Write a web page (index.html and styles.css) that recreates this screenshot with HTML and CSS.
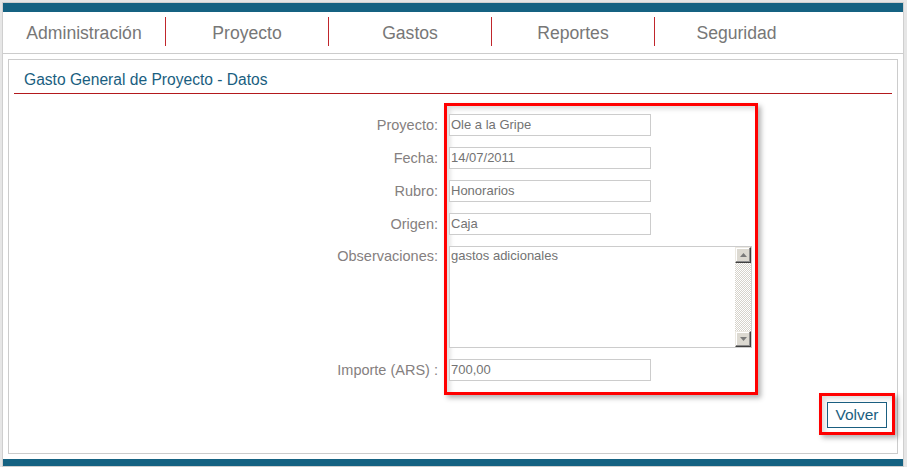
FILE: index.html
```html
<!DOCTYPE html>
<html lang="es">
<head>
<meta charset="utf-8">
<title>Gasto General de Proyecto - Datos</title>
<link rel="stylesheet" href="styles.css">
</head>
<body>
<div class="frame">
  <div class="topbar"></div>
  <nav class="menu">
    <div class="menu-item sep">Administración</div>
    <div class="menu-item sep">Proyecto</div>
    <div class="menu-item sep">Gastos</div>
    <div class="menu-item sep">Reportes</div>
    <div class="menu-item">Seguridad</div>
  </nav>
  <section class="panel">
    <h1 class="panel-title">Gasto General de Proyecto - Datos</h1>
    <div class="form">
      <div class="labels">
        <div class="label">Proyecto:</div>
        <div class="label">Fecha:</div>
        <div class="label">Rubro:</div>
        <div class="label">Origen:</div>
        <div class="label label-tall">Observaciones:</div>
        <div class="label">Importe (ARS) :</div>
      </div>
      <div class="fields highlight">
        <div class="field">Ole a la Gripe</div>
        <div class="field">14/07/2011</div>
        <div class="field">Honorarios</div>
        <div class="field">Caja</div>
        <div class="textarea">
          <div class="textarea-text">gastos adicionales</div>
          <div class="scrollbar">
            <div class="sb-btn"><svg width="7" height="4" viewBox="0 0 7 4"><path d="M3.5 0 L7 4 L0 4 Z" fill="#7a7a7a"/></svg></div>
            <div class="sb-track"></div>
            <div class="sb-btn"><svg width="7" height="4" viewBox="0 0 7 4"><path d="M0 0 L7 0 L3.5 4 Z" fill="#7a7a7a"/></svg></div>
          </div>
        </div>
        <div class="field">700,00</div>
      </div>
    </div>
    <div class="actions">
      <div class="btn-wrap highlight">
        <button class="btn" type="button">Volver</button>
      </div>
    </div>
  </section>
  <div class="bottombar"></div>
</div>
</body>
</html>
```
FILE: styles.css
```css
* { box-sizing: border-box; }

html, body {
  margin: 0;
  padding: 0;
}

body {
  background: #e6e6e6;
  font-family: "Liberation Sans", Arial, sans-serif;
  padding: 2px 3px 0 2px;
}

.frame {
  background: #fff;
  border: 1px solid #cfcfcf;
  width: 902px;
}

.topbar {
  height: 9px;
  background: #156282;
}

.menu {
  display: flex;
  height: 42px;
  padding-top: 5px;
  border-bottom: 1px solid #cccccc;
}

.menu-item {
  width: 163px;
  height: 29px;
  line-height: 33px;
  text-align: center;
  font-size: 17.6px;
  color: #777777;
}

.menu-item.sep {
  border-right: 1px solid #c0262c;
}

.panel {
  margin: 5px 5px 5px 5px;
  border: 1px solid #cccccc;
  padding-bottom: 18px;
}

.panel-title {
  margin: 0 5px;
  padding: 10px 0 0 10px;
  height: 34px;
  line-height: 20px;
  font-size: 15.6px;
  font-weight: normal;
  color: #1a5e80;
  border-bottom: 1px solid #b3191d;
}

.form {
  display: flex;
  gap: 6px;
  margin-top: 9px;
  padding-left: 229px;
}

.labels {
  width: 200px;
  display: flex;
  flex-direction: column;
  gap: 11px;
  padding-top: 11px;
}

.label {
  height: 22px;
  line-height: 22px;
  text-align: right;
  font-size: 14.5px;
  color: #858080;
}

.label-tall {
  height: 102px;
  line-height: 20px;
}

.highlight {
  border: 3px solid #ff0000;
  box-shadow: 3px 3px 5px rgba(0, 0, 0, 0.3), inset 3px 3px 5px rgba(0, 0, 0, 0.14);
}

.fields {
  width: 314px;
  padding: 8px 3px 11px 2px;
  display: flex;
  flex-direction: column;
  gap: 11px;
  background: #fff;
}

.field {
  width: 202px;
  height: 22px;
  border: 1px solid #cccccc;
  background: #fff;
  padding: 0 1px;
  line-height: 19px;
  font-size: 13px;
  color: #737373;
}

.textarea {
  width: 303px;
  height: 102px;
  border: 1px solid #cccccc;
  background: #fff;
  display: flex;
}

.textarea-text {
  flex: 1;
  padding: 1px 1px;
  line-height: 16px;
  font-size: 13px;
  color: #737373;
}

.scrollbar {
  width: 16px;
  display: flex;
  flex-direction: column;
}

.sb-btn {
  width: 16px;
  height: 16px;
  background: #dcd9d1;
  border-top: 1px solid #ece9e2;
  border-left: 1px solid #ece9e2;
  border-right: 1px solid #404040;
  border-bottom: 1px solid #404040;
  box-shadow: inset -1px -1px 0 #8c8c8c, inset 1px 1px 0 #ffffff;
  display: flex;
  align-items: center;
  justify-content: center;
}

.sb-track {
  flex: 1;
  background-color: #ffffff;
  background-image: repeating-conic-gradient(#d6d3cb 0 25%, #ffffff 0 50%);
  background-size: 2px 2px;
}

.actions {
  display: flex;
  justify-content: flex-end;
  margin-top: -2px;
  padding-right: 2px;
}

.btn-wrap {
  width: 76px;
  height: 42px;
  padding: 6px 5px 4px 5px;
  background: #fff;
}

.btn {
  width: 60px;
  height: 26px;
  margin: 0;
  padding: 0;
  border: 1px solid #1a5e80;
  background: #fff;
  font-family: "Liberation Sans", Arial, sans-serif;
  font-size: 15.5px;
  color: #1a5e80;
  line-height: 24px;
}

.bottombar {
  height: 7px;
  background: #156282;
}
```
